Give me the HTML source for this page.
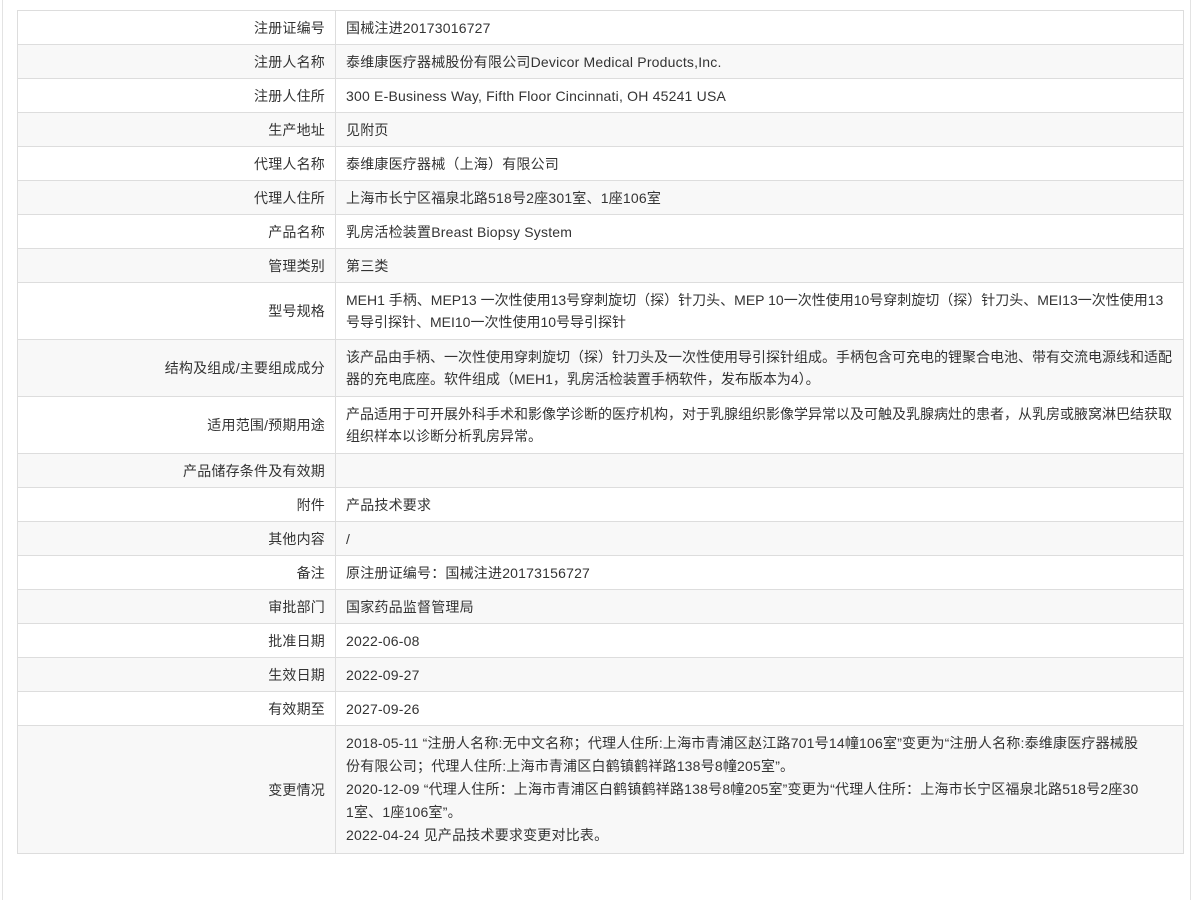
<!DOCTYPE html>
<html><head><meta charset="utf-8"><style>
html,body{margin:0;padding:0;background:#fff;width:1192px;height:847px;overflow:hidden}
.wrap{position:absolute;left:2px;top:0;width:1187px;height:900px;border-left:1px solid #e3e3e3;border-right:1px solid #e3e3e3}
table{position:absolute;left:17px;top:10px;width:1167px;border-collapse:collapse;table-layout:fixed;font-family:"Liberation Sans","Noto Sans CJK SC",sans-serif;font-size:14px;color:#333;letter-spacing:0.2px}
td{border:1px solid #ddd;padding:0 10px;height:33px;line-height:22px;overflow:hidden}
td.l{width:297px;text-align:right;padding-right:10px}
tr:nth-child(even) td{background:#f8f8f8}
tr.m td{height:56px}
tr.m td+td{letter-spacing:0;white-space:nowrap}
</style></head><body><div class="wrap"></div>
<table>
<tr><td class="l">注册证编号</td><td>国械注进20173016727</td></tr>
<tr><td class="l">注册人名称</td><td>泰维康医疗器械股份有限公司Devicor Medical Products,Inc.</td></tr>
<tr><td class="l">注册人住所</td><td>300 E-Business Way, Fifth Floor Cincinnati, OH 45241 USA</td></tr>
<tr><td class="l">生产地址</td><td>见附页</td></tr>
<tr><td class="l">代理人名称</td><td>泰维康医疗器械（上海）有限公司</td></tr>
<tr><td class="l">代理人住所</td><td>上海市长宁区福泉北路518号2座301室、1座106室</td></tr>
<tr><td class="l">产品名称</td><td>乳房活检装置Breast Biopsy System</td></tr>
<tr><td class="l">管理类别</td><td>第三类</td></tr>
<tr class="m"><td class="l">型号规格</td><td>MEH1 手柄、MEP13 一次性使用13号穿刺旋切（探）针刀头、MEP 10一次性使用10号穿刺旋切（探）针刀头、MEI13一次性使用13<br>号导引探针、MEI10一次性使用10号导引探针</td></tr>
<tr class="m"><td class="l">结构及组成/主要组成成分</td><td>该产品由手柄、一次性使用穿刺旋切（探）针刀头及一次性使用导引探针组成。手柄包含可充电的锂聚合电池、带有交流电源线和适配<br>器的充电底座。软件组成（MEH1，乳房活检装置手柄软件，发布版本为4）。</td></tr>
<tr class="m"><td class="l">适用范围/预期用途</td><td>产品适用于可开展外科手术和影像学诊断的医疗机构，对于乳腺组织影像学异常以及可触及乳腺病灶的患者，从乳房或腋窝淋巴结获取<br>组织样本以诊断分析乳房异常。</td></tr>
<tr><td class="l">产品储存条件及有效期</td><td></td></tr>
<tr><td class="l">附件</td><td>产品技术要求</td></tr>
<tr><td class="l">其他内容</td><td>/</td></tr>
<tr><td class="l">备注</td><td>原注册证编号：国械注进20173156727</td></tr>
<tr><td class="l">审批部门</td><td>国家药品监督管理局</td></tr>
<tr><td class="l">批准日期</td><td>2022-06-08</td></tr>
<tr><td class="l">生效日期</td><td>2022-09-27</td></tr>
<tr><td class="l">有效期至</td><td>2027-09-26</td></tr>
<tr><td class="l">变更情况</td><td style="padding-top:6px;padding-bottom:6px;line-height:23px;white-space:nowrap">2018-05-11 “注册人名称:无中文名称；代理人住所:上海市青浦区赵江路701号14幢106室”变更为“注册人名称:泰维康医疗器械股<br>份有限公司；代理人住所:上海市青浦区白鹤镇鹤祥路138号8幢205室”。<br>2020-12-09 “代理人住所：上海市青浦区白鹤镇鹤祥路138号8幢205室”变更为“代理人住所：上海市长宁区福泉北路518号2座30<br>1室、1座106室”。<br>2022-04-24 见产品技术要求变更对比表。</td></tr>
</table>
</body></html>
